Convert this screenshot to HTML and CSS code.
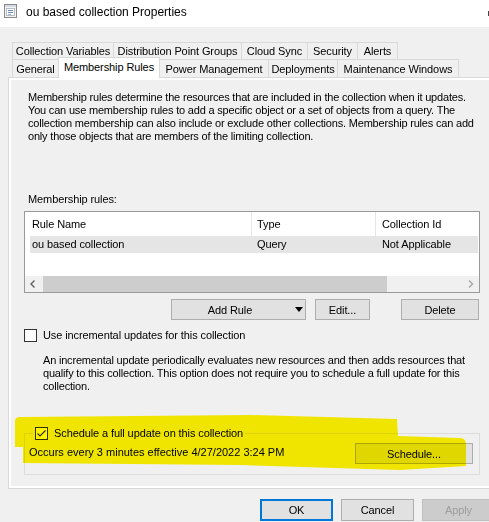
FILE: index.html
```html
<!DOCTYPE html>
<html>
<head>
<meta charset="utf-8">
<title>ou based collection Properties</title>
<link rel="stylesheet" href="styles.css">
</head>
<body>
<div class="window">
  <div class="titlebar">
    <svg class="app-icon" width="13" height="14" viewBox="0 0 13 14">
      <rect x="0.5" y="0.5" width="12" height="13" fill="#f4f4f4" stroke="#8a8a8a"/>
      <rect x="1" y="1" width="11" height="2" fill="#d3dbe4"/>
      <rect x="2.5" y="4.5" width="8" height="7" fill="#ffffff" stroke="#b4bcc6"/>
      <line x1="4" y1="6.5" x2="9" y2="6.5" stroke="#6a8cb0"/>
      <line x1="4" y1="8.5" x2="9" y2="8.5" stroke="#6a8cb0"/>
      <line x1="4" y1="10.5" x2="7" y2="10.5" stroke="#9fb3c8"/>
    </svg>
    <span class="title">ou based collection Properties</span>
    <span class="tb-glyph"></span>
  </div>

  <div class="tabs">
    <div class="tabrow">
      <div class="tab w-cv">Collection Variables</div>
      <div class="tab w-dpg">Distribution Point Groups</div>
      <div class="tab w-cs">Cloud Sync</div>
      <div class="tab w-sec">Security</div>
      <div class="tab w-al">Alerts</div>
    </div>
    <div class="tabrow tabrow-front">
      <div class="tab tab-front w-gen">General</div>
      <div class="tab tab-front tab-active w-mr">Membership Rules</div>
      <div class="tab tab-front w-pm">Power Management</div>
      <div class="tab tab-front w-dep">Deployments</div>
      <div class="tab tab-front w-mw">Maintenance Windows</div>
    </div>
  </div>

  <div class="panel">
    <div class="page">
      <p class="desc">Membership rules determine the resources that are included in the collection when it updates.<br>You can use membership rules to add a specific object or a set of objects from a query. The<br>collection membership can also include or exclude other collections. Membership rules can add<br>only those objects that are members of the limiting collection.</p>

      <div class="field-label">Membership rules:</div>

      <div class="listview">
        <div class="lv-header">
          <div class="lv-h1">Rule Name</div>
          <div class="lv-h2">Type</div>
          <div class="lv-h3">Collection Id</div>
        </div>
        <div class="lv-row">
          <div class="lv-c1">ou based collection</div>
          <div class="lv-c2">Query</div>
          <div class="lv-c3">Not Applicable</div>
        </div>
        <div class="lv-empty"></div>
        <div class="hscroll">
          <div class="sb-btn">
            <svg width="17" height="16" viewBox="0 0 17 16"><polyline points="9.5,4.5 6,8 9.5,11.5" fill="none" stroke="#606060" stroke-width="1.4"/></svg>
          </div>
          <div class="sb-thumb"></div>
          <div class="sb-track"></div>
          <div class="sb-btn">
            <svg width="17" height="16" viewBox="0 0 17 16"><polyline points="7,4.5 10.5,8 7,11.5" fill="none" stroke="#a6a6a6" stroke-width="1.4"/></svg>
          </div>
        </div>
      </div>

      <div class="rule-buttons">
        <button class="btn btn-add"><span class="btn-add-label">Add Rule</span><span class="caret"></span></button>
        <button class="btn btn-edit">Edit...</button>
        <button class="btn btn-delete">Delete</button>
      </div>

      <div class="check-row">
        <span class="checkbox"></span>
        <span>Use incremental updates for this collection</span>
      </div>

      <p class="incr-desc">An incremental update periodically evaluates new resources and then adds resources that<br>qualify to this collection. This option does not require you to schedule a full update for this<br>collection.</p>

      <div class="groupbox">
        <div class="group-title">
          <span class="checkbox">
            <svg width="11" height="11" viewBox="0 0 11 11"><polyline points="1.5,5.5 4,8 9.5,2.5" fill="none" stroke="#333" stroke-width="1.2"/></svg>
          </span>
          <span>Schedule a full update on this collection</span>
        </div>
        <div class="group-body">
          <span class="schedule-text">Occurs every 3 minutes effective 4/27/2022 3:24 PM</span>
          <button class="btn btn-schedule">Schedule...</button>
        </div>
      </div>
    </div>
  </div>

  <div class="footer">
    <button class="btn btn-dlg btn-ok">OK</button>
    <button class="btn btn-dlg">Cancel</button>
    <button class="btn btn-dlg btn-apply">Apply</button>
  </div>

  <svg class="highlighter" width="489" height="522" viewBox="0 0 489 522">
    <path d="M15 421 Q15 417 20 417 L250 415 L397 419 L398 436 L461 438 Q466 439 466 444 L466 466 L400 470 L240 465 L23 463 L23 447 L15 447 Z" fill="#fff400"/>
  </svg>
</div>
</body>
</html>
```

FILE: styles.css
```css
html, body {
  margin: 0;
  padding: 0;
  background: #f0f0f0;
  overflow: hidden;
}

body {
  font-family: "Liberation Sans", Arial, sans-serif;
  font-size: 11px;
  letter-spacing: -0.1px;
  color: #000;
}

.window {
  position: relative;
  width: 489px;
  height: 522px;
  overflow: hidden;
  background: #f0f0f0;
}

/* Title bar */
.titlebar {
  height: 27px;
  background: #fff;
  display: flex;
  align-items: flex-start;
  padding-left: 4px;
  box-sizing: border-box;
}

.app-icon {
  margin-top: 4px;
  flex-shrink: 0;
}

.title {
  margin-left: 9px;
  padding-top: 5px;
  font-size: 12px;
  line-height: 14px;
  letter-spacing: 0;
  white-space: nowrap;
}

.tb-glyph {
  margin-left: auto;
  margin-top: 11px;
  width: 1px;
  height: 5px;
  background: #444;
}

/* Tabs */
.tabs {
  margin-top: 15px;
  padding-left: 12px;
}

.tabrow {
  display: flex;
}

.tab {
  box-sizing: border-box;
  height: 17px;
  line-height: 16px;
  border: 1px solid #d9d9d9;
  border-bottom: none;
  background: #f0f0f0;
  text-align: center;
  white-space: nowrap;
  flex-shrink: 0;
}

.tab + .tab {
  margin-left: -1px;
}

.tabrow-front {
  height: 18px;
}

.tab-front {
  height: 18px;
  padding-top: 1px;
}

.tab-active {
  position: relative;
  z-index: 1;
  margin-top: -2px;
  height: 21px;
  background: #fff;
}

.w-cv { width: 102px; }
.w-dpg { width: 129px; }
.w-cs { width: 67px; }
.w-sec { width: 51px; }
.w-al { width: 41px; }
.w-gen { width: 47px; }
.w-mr { width: 102px; }
.w-pm { width: 110px; }
.w-dep { width: 70px; }
.w-mw { width: 122px; }

/* Tab panel (continues past the right edge of the view) */
.panel {
  box-sizing: border-box;
  width: 530px;
  margin-left: 8px;
  border: 1px solid #d9d9d9;
  border-right: none;
  padding: 2px 0 2px 2px;
  background: #fff;
}

.page {
  box-sizing: border-box;
  height: 406px;
  background: #f0f0f0;
  padding: 11px 0 0 13px;
}

.desc {
  margin: 0 0 0 4px;
  line-height: 13px;
  letter-spacing: -0.19px;
  white-space: nowrap;
}

.field-label {
  margin: 50px 0 0 4px;
  line-height: 13px;
}

/* List view */
.listview {
  margin-top: 5px;
  width: 456px;
  box-sizing: border-box;
  border: 1px solid #9a9a9a;
  background: #fff;
}

.lv-header {
  display: grid;
  grid-template-columns: 226px 124px 1fr;
  height: 24px;
  line-height: 24px;
  white-space: nowrap;
}

.lv-h1 { padding-left: 7px; }
.lv-h2 { padding-left: 5px; border-left: 1px solid #e5e5e5; }
.lv-h3 { padding-left: 6px; border-left: 1px solid #e5e5e5; }

.lv-row {
  display: grid;
  grid-template-columns: 221px 124px 1fr;
  margin: 0 1px 0 5px;
  height: 17px;
  line-height: 17px;
  background: #e5e5e5;
  white-space: nowrap;
}

.lv-c1 { padding-left: 2px; }
.lv-c2 { padding-left: 6px; }
.lv-c3 { padding-left: 7px; }

.lv-empty {
  height: 23px;
}

.hscroll {
  display: flex;
  height: 16px;
  background: #f0f0f0;
}

.sb-btn {
  width: 17px;
  height: 16px;
  flex-shrink: 0;
}

.sb-btn svg {
  display: block;
}

.sb-thumb {
  margin-left: 1px;
  width: 344px;
  background: #cdcdcd;
  flex-shrink: 0;
}

.sb-track {
  flex: 1;
}

/* Buttons */
.btn {
  font: inherit;
  letter-spacing: inherit;
  color: #000;
  box-sizing: border-box;
  height: 21px;
  border: 1px solid #adadad;
  background: #e1e1e1;
  padding: 0;
  margin: 0;
  flex-shrink: 0;
}

.rule-buttons {
  display: flex;
  margin-top: 6px;
}

.btn-add {
  margin-left: 147px;
  width: 135px;
  display: flex;
  align-items: center;
}

.btn-add-label {
  flex: 1;
  text-align: center;
}

.caret {
  width: 0;
  height: 0;
  margin: 0 2px 0 7px;
  border-left: 4px solid transparent;
  border-right: 4px solid transparent;
  border-top: 5px solid #000;
}

.btn-edit {
  margin-left: 9px;
  width: 55px;
}

.btn-delete {
  margin-left: 31px;
  width: 78px;
}

/* Checkboxes */
.check-row {
  display: flex;
  gap: 6px;
  margin-top: 9px;
  line-height: 13px;
}

.checkbox {
  box-sizing: border-box;
  width: 13px;
  height: 13px;
  border: 1px solid #333;
  background: #fff;
  flex-shrink: 0;
  display: flex;
  align-items: center;
  justify-content: center;
}

.incr-desc {
  margin: 12px 0 0 19px;
  line-height: 13px;
  letter-spacing: -0.19px;
  white-space: nowrap;
}

/* Group box */
.groupbox {
  margin-top: 40px;
  width: 456px;
  box-sizing: border-box;
  border: 1px solid #dcdcdc;
  padding: 0 6px 10px 4px;
}

.group-title {
  display: flex;
  gap: 6px;
  width: max-content;
  margin: -7px 0 0 4px;
  padding: 0 2px;
  background: #f0f0f0;
  line-height: 13px;
}

.group-body {
  display: flex;
  justify-content: space-between;
  align-items: flex-start;
  margin-top: 3px;
}

.schedule-text {
  padding-top: 3px;
  line-height: 13px;
  letter-spacing: 0;
  white-space: nowrap;
}

.btn-schedule {
  width: 118px;
}

/* Footer */
.footer {
  display: flex;
  gap: 8px;
  padding: 10px 0 0 260px;
}

.btn-dlg {
  width: 73px;
  height: 22px;
}

.btn-ok {
  border: 2px solid #0078d7;
}

.btn-apply {
  background: #cccccc;
  border-color: #bfbfbf;
  color: #9d9d9d;
}

/* Highlighter mark */
.highlighter {
  position: absolute;
  left: 0;
  top: 0;
  mix-blend-mode: multiply;
  pointer-events: none;
}
```
